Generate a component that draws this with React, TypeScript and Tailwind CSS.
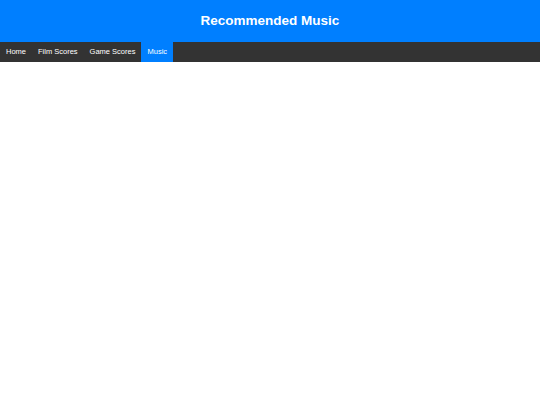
import React from "react";

const links = ["Home", "Film Scores", "Game Scores", "Music"];

export default function App() {
  return (
    <div className="min-h-screen bg-white" style={{ fontFamily: '"Liberation Sans", Arial, sans-serif' }}>
      <header className="bg-[#007fff] h-[42px] flex items-center justify-center">
        <h1 className="text-white font-bold text-[13.5px]">Recommended Music</h1>
      </header>
      <nav className="bg-[#333333] h-[20px] flex">
        {links.map((l) => (
          <a
            key={l}
            className={
              "px-[6px] flex items-center text-[7.5px] text-white " +
              (l === "Music" ? "bg-[#007fff]" : "")
            }
          >
            {l}
          </a>
        ))}
      </nav>
    </div>
  );
}
